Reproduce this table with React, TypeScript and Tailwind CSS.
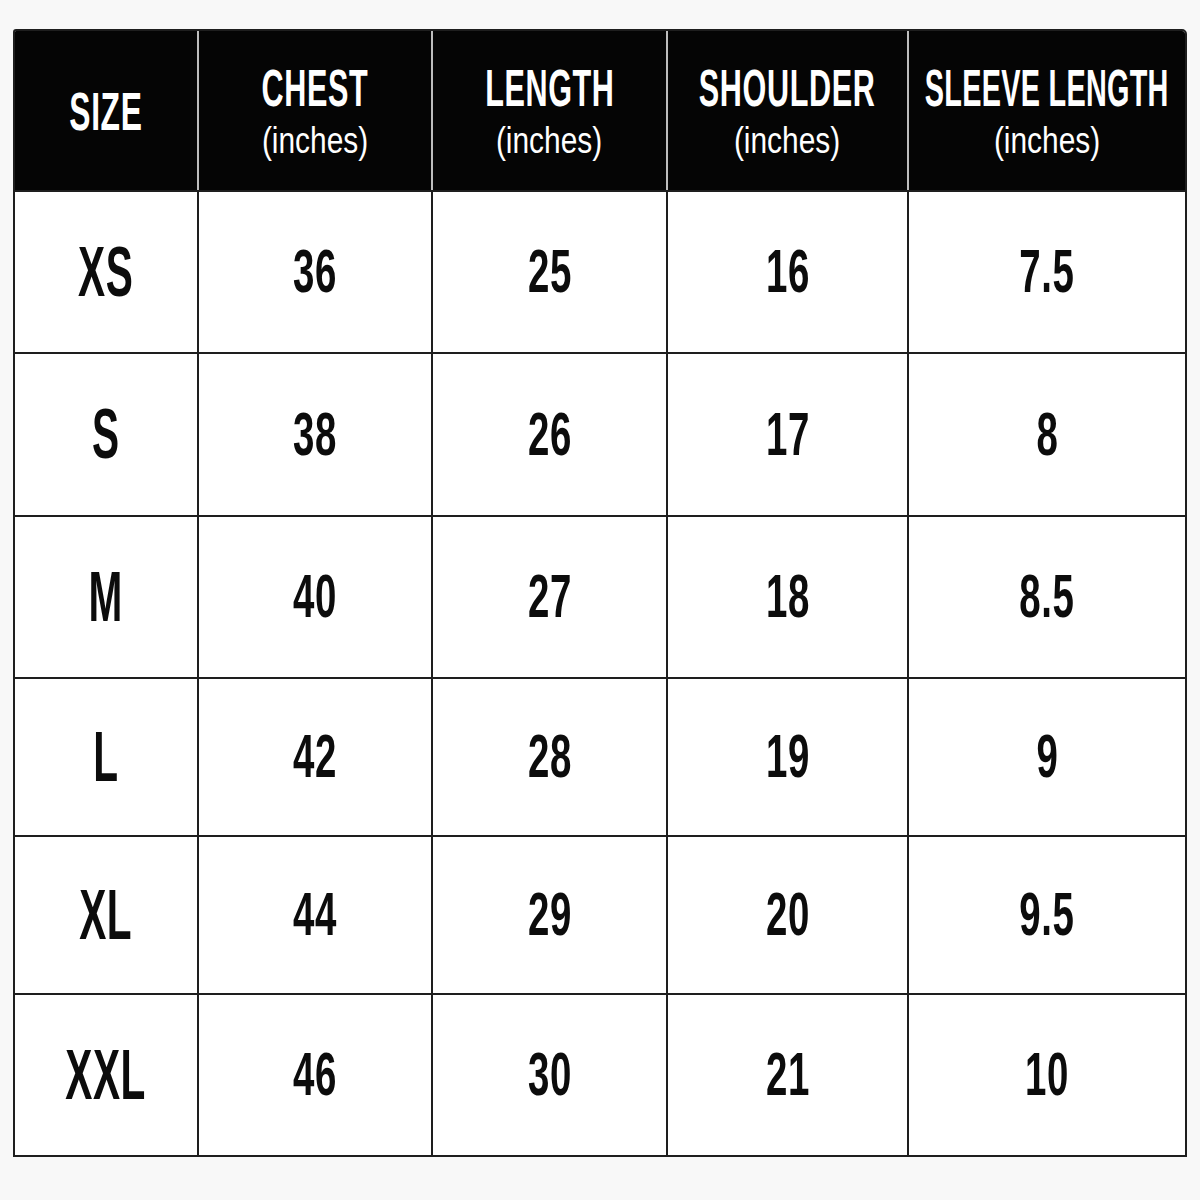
import React from "react";

const font = "font-['Liberation_Sans',Arial,sans-serif]";

const rows: [string, string, string, string, string][] = [
  ["XS", "36", "25", "16", "7.5"],
  ["S", "38", "26", "17", "8"],
  ["M", "40", "27", "18", "8.5"],
  ["L", "42", "28", "19", "9"],
  ["XL", "44", "29", "20", "9.5"],
  ["XXL", "46", "30", "21", "10"],
];

const headers: { title: string; cls: string }[] = [
  { title: "CHEST", cls: "scale-x-[0.6] tracking-[1px]" },
  { title: "LENGTH", cls: "scale-x-[0.6] tracking-[1px]" },
  { title: "SHOULDER", cls: "scale-x-[0.6] tracking-[1px]" },
  { title: "SLEEVE LENGTH", cls: "scale-x-[0.565] tracking-[0.5px]" },
];

function HeadCell({ title, cls }: { title: string; cls: string }) {
  return (
    <div className="flex flex-col items-center justify-center bg-[#050505] text-white border-l-2 border-[#bdbdbd]">
      <span
        className={`shrink-0 whitespace-nowrap inline-block text-[51px] leading-[52px] font-bold mt-[2px] ${cls}`}
      >
        {title}
      </span>
      <span className="shrink-0 whitespace-nowrap inline-block text-[36px] leading-[40px] font-normal scale-x-[0.83] mt-[6px]">
        (inches)
      </span>
    </div>
  );
}

export default function App() {
  return (
    <div className={`min-h-[1200px] w-[1200px] bg-[#f8f8f8] pt-[29px] pl-[13px] ${font}`}>
      <div className="w-[1174px] border-2 border-[#1e1e1e] rounded-tr-[5px] rounded-tl-[3px] overflow-hidden bg-white grid grid-cols-[182px_234px_235px_241px_278px] grid-rows-[159px_162px_163px_162px_158px_158px_162px]">
        <div className="flex items-center justify-center bg-[#050505] text-white">
          <span className="shrink-0 whitespace-nowrap inline-block text-[53px] font-bold scale-x-[0.6] tracking-[1px] mt-[2px]">
            SIZE
          </span>
        </div>
        {headers.map((h) => (
          <HeadCell key={h.title} title={h.title} cls={h.cls} />
        ))}
        {rows.map((r) =>
          r.map((v, i) => (
            <div
              key={r[0] + i}
              className={`flex items-center justify-center border-t-2 border-[#1e1e1e] bg-white text-[#0c0c0c] ${
                i === 0 ? "" : "border-l-2"
              }`}
            >
              <span
                className={`shrink-0 whitespace-nowrap inline-block font-bold ${
                  i === 0
                    ? "text-[70px] scale-x-[0.58] tracking-[1px]"
                    : "text-[61px] scale-x-[0.63] tracking-[1px]"
                }`}
              >
                {v}
              </span>
            </div>
          ))
        )}
      </div>
    </div>
  );
}
